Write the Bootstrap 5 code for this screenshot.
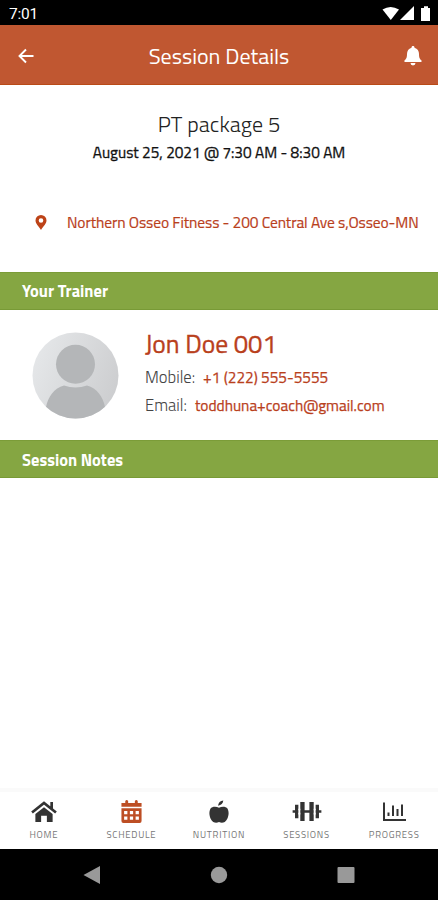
<!DOCTYPE html>
<html lang="en">
<head>
<meta charset="utf-8">
<meta name="viewport" content="width=device-width, initial-scale=1">
<title>Session Details</title>
<link href="https://cdn.jsdelivr.net/npm/bootstrap@5.3.0/dist/css/bootstrap.min.css" rel="stylesheet">
<style>
:root{--rust:#c05731;--rust-text:#b9401c;--leaf:#85a642}
body{font-family:"Titillium Web",Roboto,"Noto Sans",sans-serif;line-height:1;color:#111;background:#fff}
svg{display:block;flex:none}
a{color:var(--rust-text)}
.screen{height:900px;width:438px;overflow:hidden}
.statusbar{height:25px;padding:2px 7px 0 9px;font:400 15.5px Roboto,sans-serif;letter-spacing:-.2px}
.appbar{height:60px;padding:3px 16px 0 18px;background:var(--rust);border-bottom:1.5px solid #b94a17}
.appbar h1{font-size:22px}
.summary{height:187px;padding-top:27px}
.summary h2{font-size:22px;line-height:24px;font-weight:300;color:#222;letter-spacing:.05px}
.when{font-size:15.4px;line-height:20px;margin-top:7px;-webkit-text-stroke:.3px}
.place{margin-top:49px;padding-left:35px;font-size:15.5px;line-height:20px;letter-spacing:-.09px}
.place a{margin-left:20px;-webkit-text-stroke:.2px}
.band{height:38px;padding-left:22px;background:var(--leaf);border-top:1px solid #7b9c38;border-bottom:1px solid #789a36;font-size:16.5px;line-height:36px}
.notes{line-height:38px}
.trainer{height:130px;padding:22px 0 0 32px}
.info{margin-left:26px;font-size:16.6px;color:#444}
.info h3{font-size:25.6px;line-height:24px;padding-bottom:3px;color:var(--rust-text);-webkit-text-stroke:.35px}
.info p{line-height:20px;height:20px;font-weight:300}
.info p a{font-weight:400;font-size:15.4px;margin-left:8px;-webkit-text-stroke:.25px}
.tabs{height:61px;border-top:4px solid #fafafa}
.tabs a{width:87.6px;padding-top:8px;font-size:9.5px;color:#777;letter-spacing:.72px}
.tabs svg{margin-bottom:7px;color:#333}
.tabs .current svg{color:#bd4e24}
.sysnav{height:51px;padding:0 83px 0 83px}
</style>
</head>
<body>
<div class="screen d-flex flex-column">
  <div class="statusbar bg-black text-white d-flex align-items-center justify-content-between">
    <span>7:01</span>
    <svg width="50" height="16" viewBox="0 0 50 16" fill="#fff"><path d="M1.500 3.500Q9.500-1.500 18 3.500L9.800 14Z"/><path d="M33 0V14H19Z"/><path d="M40 2h3V.2h4V2h2v13h-9z"/></svg>
  </div>
  <header class="appbar d-flex align-items-center justify-content-between text-white">
    <svg width="16" height="16" viewBox="0 0 16 16" fill="none" stroke="#fff" stroke-width="1.900"><path d="M15.500 8H1.500M8 1.500L1.500 8L8 14.500"/></svg>
    <h1 class="m-0 fw-normal">Session Details</h1>
    <svg width="18" height="20" viewBox="0 0 18 20" fill="#fff"><path d="M9 0c1 0 1.500.7 1.500 1.700C13.500 2.500 15 5 15 8c0 4 1 5 2.500 6.500.5.700.2 1.500-.7 1.500H1.200c-.9 0-1.200-.8-.7-1.500C2 13 3 12 3 8c0-3 1.500-5.500 4.500-6.300C7.500.7 8 0 9 0zM6.500 17h5a2.500 2.500 0 0 1-5 0z"/></svg>
  </header>
  <section class="summary text-center">
    <h2 class="m-0">PT package 5</h2>
    <div class="when">August 25, 2021 @ 7:30 AM - 8:30 AM</div>
    <div class="place d-flex align-items-center text-nowrap">
      <svg width="12" height="15" viewBox="0 0 12 15" fill="#bd4318"><path fill-rule="evenodd" d="M6 0a5.500 5.500 0 0 1 5.500 5.500C11.500 8.500 8.500 11 6 15C3.500 11 .5 8.500.5 5.500A5.500 5.500 0 0 1 6 0zm0 3.200a2.300 2.300 0 1 0 0 4.600a2.300 2.300 0 0 0 0-4.600z"/></svg>
      <a href="#" class="text-decoration-none">Northern Osseo Fitness - 200 Central Ave s,Osseo-MN</a>
    </div>
  </section>
  <div class="band text-white fw-bold">Your Trainer</div>
  <section class="trainer d-flex align-items-start">
    <svg width="87" height="87" viewBox="0 0 87 87"><defs><linearGradient id="disc" x1="0" x2="1" y1=".3" y2=".7"><stop stop-color="#e5e7e9"/><stop offset="1" stop-color="#cccdcf"/></linearGradient><clipPath id="round"><circle cx="43.500" cy="43.500" r="43"/></clipPath></defs><circle cx="43.500" cy="43.500" r="43" fill="url(#disc)"/><g fill="#b4b6b8" clip-path="url(#round)"><circle cx="43.500" cy="32.300" r="19.500"/><path d="M32 53.500q11.500 4 23 0C65 56 71 65 73 75V87H14V75C16 65 22 56 32 53.500z"/></g></svg>
    <div class="info text-nowrap">
      <h3 class="m-0 fw-normal">Jon Doe 001</h3>
      <p class="mt-2 mb-2">Mobile:<a href="#" class="text-decoration-none">+1 (222) 555-5555</a></p>
      <p class="m-0">Email:<a href="#" class="text-decoration-none">toddhuna+coach@gmail.com</a></p>
    </div>
  </section>
  <div class="band notes text-white fw-bold">Session Notes</div>
  <main class="flex-grow-1"></main>
  <nav class="tabs d-flex">
    <a href="#" class="d-flex flex-column align-items-center text-decoration-none"><svg width="28" height="23" viewBox="0 0 28 24"><path d="M1.500 13L14 3L26.500 13M22 9V2" fill="none" stroke="currentColor" stroke-width="2.800"/><path fill="currentColor" d="M5 14.500L14 7.500L23 14.500V23H17V16.500H11V23H5z"/></svg>HOME</a>
    <a href="#" class="current d-flex flex-column align-items-center text-decoration-none"><svg width="23" height="23" viewBox="0 0 23 24" fill="currentColor"><path d="M1 7V3H5V1Q6.500-1 8 1V3H15V1Q16.500-1 18 1V3H22V7z"/><path fill-rule="evenodd" d="M1 8.500H22V22Q22 24 20 24H3Q1 24 1 22zM3.800 11.500v3.400h3.400v-3.400zm6 0v3.400h3.400v-3.400zm6 0v3.400h3.400v-3.400zM3.800 17.300v3.400h3.400v-3.400zm6 0v3.400h3.400v-3.400zm6 0v3.400h3.400v-3.400z"/></svg>SCHEDULE</a>
    <a href="#" class="d-flex flex-column align-items-center text-decoration-none"><svg width="22" height="23" viewBox="0 0 22 24" fill="currentColor"><path d="M11 8C14 6.500 18 6.500 20 9C22.500 14 20 21 17 23Q14 24.500 11 23Q8 24.500 5 23C2 21-.5 14 2 9C4 6.500 8 6.500 11 8zM10 6Q10.500 1 15.500.5Q15 5 10 6z"/></svg>NUTRITION</a>
    <a href="#" class="d-flex flex-column align-items-center text-decoration-none"><svg width="30" height="23" viewBox="0 0 30 24" fill="currentColor"><path d="M0 10.700h30v2.600H0zM2.500 5h3.500v14H2.500zM8 2h4.500v20H8zM17.500 2H22v20h-4.500zM24 5h3.500v14H24z"/><path fill="#fff" d="M6 9h2v6H6zM22 9h2v6h-2z"/></svg>SESSIONS</a>
    <a href="#" class="d-flex flex-column align-items-center text-decoration-none"><svg width="24" height="23" viewBox="0 0 24 23" fill="none" stroke="currentColor" stroke-width="2"><path d="M2 2.500V20H24M6.500 16V12.500M11 16V5.500M15.500 16V9M20 16V4.500"/></svg>PROGRESS</a>
  </nav>
  <footer class="sysnav bg-black d-flex align-items-center justify-content-between">
    <svg width="18" height="18" viewBox="0 0 18 18"><path fill="#999" d="M.5 9L17 0V18z"/></svg>
    <svg width="18" height="18" viewBox="0 0 18 18"><circle cx="9" cy="9" r="8.200" fill="#999"/></svg>
    <svg width="18" height="18" viewBox="0 0 18 18"><rect x=".5" y="1" width="17" height="16" rx="1" fill="#999"/></svg>
  </footer>
</div>
<script src="https://cdn.jsdelivr.net/npm/bootstrap@5.3.0/dist/js/bootstrap.bundle.min.js"></script>
</body>
</html>
